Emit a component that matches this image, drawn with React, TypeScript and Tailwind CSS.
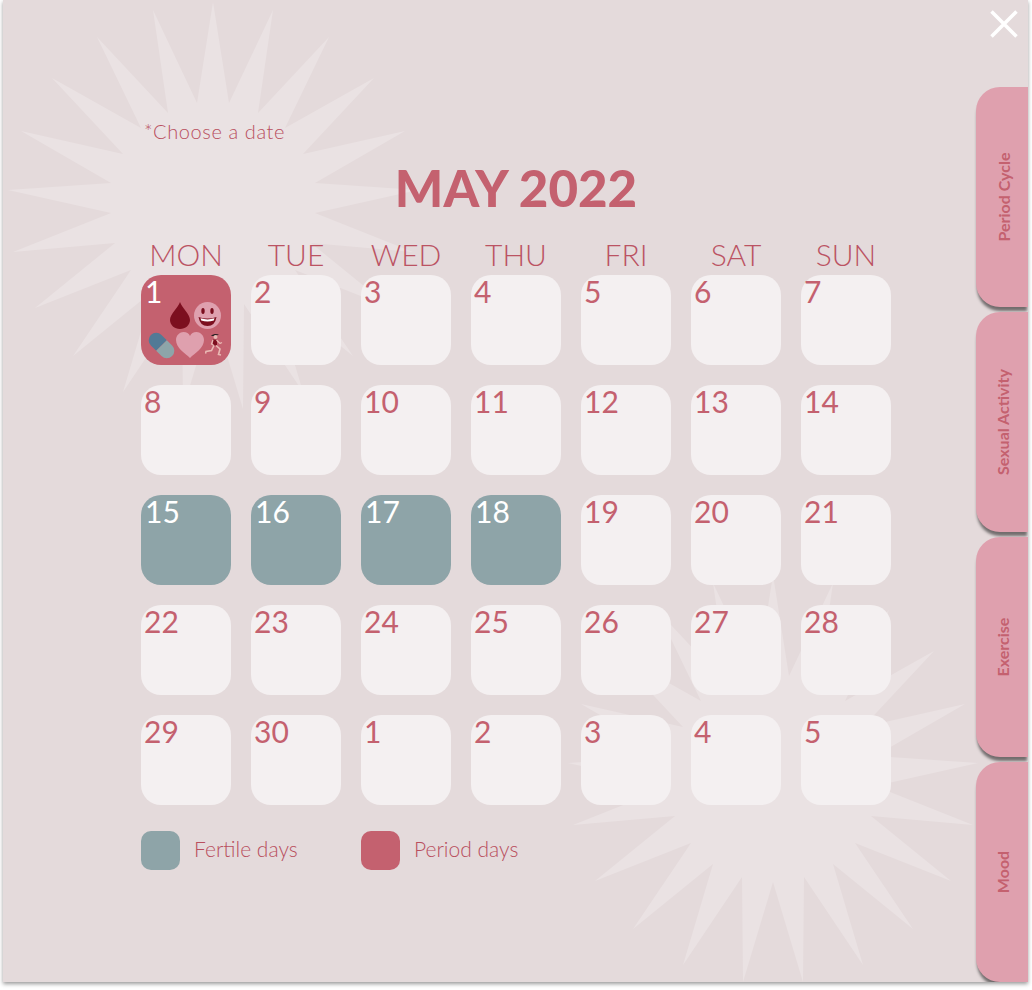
import React from 'react';

const DAYS = ['MON', 'TUE', 'WED', 'THU', 'FRI', 'SAT', 'SUN'];
const TABS = ['Period Cycle', 'Sexual Activity', 'Exercise', 'Mood'];

// tips and valleys of the burst, right half from the top, relative to its centre
const half = [
  [0, -188], [16, -87], [60, -180], [45, -77], [116, -153], [72, -62], [161, -112], [90, -36],
  [192, -59], [102, -7], [205, 0], [102, 23], [200, 62], [98, 53], [178, 118], [82, 80],
  [140, 166], [60, 101], [90, 202], [31, 114], [30, 219], [0, 119],
];
const mirrored = half.slice(1, -1).reverse().map(([x, y]) => [-x, y]);
const burst = [...half, ...mirrored].map(([x, y]) => `${x},${y}`).join(' ');

const Burst = ({ className }: { className: string }) => (
  <svg className={`absolute ${className}`} width="420" height="420" viewBox="-210 -190 420 420">
    <polygon points={burst} fill="#eae2e3" />
  </svg>
);

const Drop = () => (
  <svg width="20" height="27" viewBox="0 0 20 27">
    <path d="M10 0 C12 6 20 12 20 18 C20 23 15.500 27 10 27 C4.500 27 0 23 0 18 C0 12 8 6 10 0 Z" fill="#7c0f1f" />
  </svg>
);

const Smile = () => (
  <svg width="27" height="27" viewBox="0 0 27 27">
    <circle cx="13.500" cy="13.500" r="13.500" fill="#dfa0ae" />
    <ellipse cx="9" cy="9" rx="1.700" ry="3" fill="#7c0f1f" />
    <ellipse cx="18" cy="9" rx="1.700" ry="3" fill="#7c0f1f" />
    <path d="M4.500 15 Q13.500 18 22.500 15 Q21 24 13.500 24 Q6 24 4.500 15 Z" fill="#7c0f1f" />
    <path d="M6.500 16.300 Q13.500 18.500 20.500 16.300 L19.800 18.500 Q13.500 20.300 7.200 18.500 Z" fill="#ffffff" />
  </svg>
);

const Pill = () => (
  <svg width="25" height="25" viewBox="0 0 25 25" className="overflow-visible">
    <g transform="rotate(45 12.500 12.500)">
      <path d="M12.500 5 H5 A7.500 7.500 0 0 0 5 20 H12.500 Z" fill="#527a96" />
      <path d="M12.500 5 H20 A7.500 7.500 0 0 1 20 20 H12.500 Z" fill="#8da5a9" />
    </g>
  </svg>
);

const Heart = () => (
  <svg width="28" height="26" viewBox="0 0 28 26">
    <path d="M14 26 C9 21 0 16 0 8 C0 3 4 0 7.500 0 C10.500 0 13 1.500 14 4 C15 1.500 17.500 0 20.500 0 C24 0 28 3 28 8 C28 16 19 21 14 26 Z" fill="#dfa0ae" />
  </svg>
);

const Runner = () => (
  <svg width="18" height="25" viewBox="0 0 18 25">
    <path d="M6 3 C8 0.500 12 0.800 14 1.500 L10 3 Z" fill="#2b2024" />
    <circle cx="10.500" cy="4" r="2" fill="#e9b9b4" />
    <path d="M8 6.500 L12 6.800 L12 12.500 L8 12.500 Z" fill="#7c0f1f" />
    <path d="M11.500 7 L15 10.500 L17 9.500" fill="none" stroke="#e9b9b4" strokeWidth="1.300" />
    <path d="M8 7 L6.500 11 L9 12.500" fill="none" stroke="#e9b9b4" strokeWidth="1.300" />
    <path d="M9 12.500 L6.500 17.500 L1 18.500 L0.500 20.500" fill="none" stroke="#e9b9b4" strokeWidth="1.600" />
    <path d="M11 12.500 L15 16 L13.500 21.500 L16 22" fill="none" stroke="#e9b9b4" strokeWidth="1.600" />
  </svg>
);

const Cell = ({ n, tone }: { n: number; tone: 'plain' | 'fertile' | 'period' }) => {
  if (tone === 'plain') {
    return (
      <div className="h-[90px] rounded-[20px] bg-[#f4f0f1] pl-[3px] text-[30px] leading-[33px] text-[#c4616f]">
        {n}
      </div>
    );
  }
  return (
    <div
      className={`relative h-[90px] rounded-[20px] pl-[4px] text-[30px] leading-[33px] text-white ${
        tone === 'fertile' ? 'bg-[#8ea4a8]' : 'bg-[#c4616f]'
      }`}
    >
      {n}
      {tone === 'period' && (
        <div className="absolute bottom-[7px] left-[8px] flex w-[74px] flex-col gap-[3px]">
          <div className="flex justify-end gap-[4px] pr-[2px]">
            <Drop />
            <Smile />
          </div>
          <div className="flex items-center justify-between">
            <Pill />
            <Heart />
            <Runner />
          </div>
        </div>
      )}
    </div>
  );
};

export default function App() {
  const may = Array.from({ length: 30 }, (_, i) => i + 1);
  const cells = [...may, 1, 2, 3, 4, 5];

  return (
    <div className="h-[990px] w-[1032px] overflow-hidden bg-white pb-[8px] pl-[3px] pr-[4px] font-['Lato',sans-serif]">
      <div className="relative flex h-[982px] justify-between overflow-hidden bg-[#e4dadb] shadow-[0_2px_4px_rgba(0,0,0,0.4)]">
        <Burst className="left-[0px] top-[0px]" />
        <Burst className="left-[560px] top-[573px]" />

        <div className="relative w-[908px] pl-[138px] pt-[119px]">
          <p className="pl-[3px] text-[20px] font-light leading-6 tracking-[0.6px] text-[#b94f5e]">*Choose a date</p>
          <h1 className="mt-[15px] pr-[20px] text-center text-[51px] font-black leading-[60px] text-[#c4616f]">MAY 2022</h1>
          <div className="mb-[2px] mt-[17px] grid grid-cols-[repeat(7,90px)] gap-x-[20px] text-center text-[30px] font-light leading-[38px] text-[#bb5363]">
            {DAYS.map((d) => (
              <div key={d}>{d}</div>
            ))}
          </div>
          <div className="grid grid-cols-[repeat(7,90px)] gap-[20px]">
            {cells.map((n, i) => (
              <Cell
                key={i}
                n={n}
                tone={i === 0 ? 'period' : i >= 14 && i <= 17 ? 'fertile' : 'plain'}
              />
            ))}
          </div>
          <div className="mt-[26px] flex items-center text-[21px] font-light text-[#b94f5e]">
            <div className="flex w-[220px] items-center gap-[14px]">
              <div className="h-[39px] w-[39px] rounded-[10px] bg-[#8ea4a8]" />
              <span className="pb-[3px]">Fertile days</span>
            </div>
            <div className="flex items-center gap-[14px]">
              <div className="h-[39px] w-[39px] rounded-[10px] bg-[#c4616f]" />
              <span className="pb-[3px]">Period days</span>
            </div>
          </div>
        </div>

        <div className="relative flex w-[52px] flex-col gap-[5px] pt-[87px]">
          {TABS.map((t) => (
            <div
              key={t}
              className="flex h-[220px] items-center justify-center rounded-l-[24px] bg-[#dfa0ae] pl-[2px] shadow-[0_5px_3px_-1px_rgba(0,0,0,0.5)]"
            >
              <span className="-rotate-90 whitespace-nowrap text-[16px] font-bold text-[#c4616f]">{t}</span>
            </div>
          ))}
        </div>

        <svg className="absolute right-[9px] top-[9px]" width="30" height="30" viewBox="0 0 30 30">
          <path d="M2.500 2.500 L27.500 27.500 M27.500 2.500 L2.500 27.500" stroke="#ffffff" strokeWidth="3.500" />
        </svg>
      </div>
    </div>
  );
}
